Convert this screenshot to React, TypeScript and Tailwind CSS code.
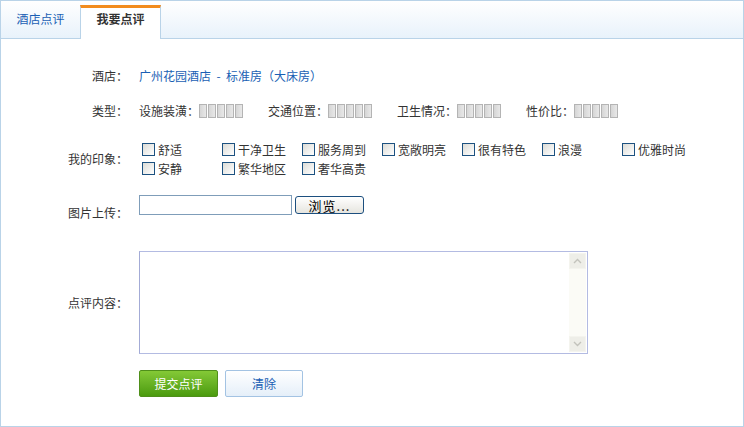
import React from 'react';

const font = { fontFamily: '"Noto Sans CJK SC", "Liberation Sans", sans-serif' };

const impressions = [
  ['舒适', '干净卫生', '服务周到', '宽敞明亮', '很有特色', '浪漫', '优雅时尚'],
  ['安静', '繁华地区', '奢华高贵'],
];

const ratings = ['设施装潢', '交通位置', '卫生情况', '性价比'];

const Stars: React.FC = () => (
  <div className="flex gap-[1px]">
    {[0, 1, 2, 3, 4].map((i) => (
      <span
        key={i}
        className="block w-[8px] h-[14px] border border-[#b4b4b4] bg-gradient-to-r from-[#d6d6d6] to-[#e8e8e8]"
      />
    ))}
  </div>
);

const Check: React.FC<{ label: string }> = ({ label }) => (
  <label className="w-[80px] flex items-center h-[19px]">
    <span className="block ml-[3px] w-[13px] h-[13px] border border-[#1c5180] bg-gradient-to-br from-[#dcdcd7] to-[#ffffff]" />
    <span className="ml-[3px] leading-none">{label}</span>
  </label>
);

const Label: React.FC<{ children: React.ReactNode; className?: string }> = ({ children, className }) => (
  <div className={`w-[127px] shrink-0 text-right ${className ?? ''}`}>{children}</div>
);

const App: React.FC = () => {
  return (
    <div
      className="w-[744px] h-[427px] border border-[#b9d3e8] bg-white text-[12px] text-[#333] overflow-hidden"
      style={font}
    >
      {/* tabs */}
      <div className="h-[38px] flex items-end bg-gradient-to-b from-[#ffffff] to-[#e8f2fb] border-b border-[#b9d3e8]">
        <div className="w-[79px] h-[37px] flex items-center justify-center text-[#1a5fb4] pb-[2px]">
          酒店点评
        </div>
        <div className="w-[81px] h-[34px] -mb-[1px] bg-white border-x border-[#b9d3e8] border-t-[3px] border-t-[#f28c1e] flex items-start justify-center pt-[2px] font-bold text-[#333]">
          我要点评
        </div>
      </div>

      <div className="flex flex-col">
        {/* hotel */}
        <div className="flex items-center h-[20px] mt-[27px]">
          <Label>酒店：</Label>
          <div className="ml-[11px] text-[#1a5fb4] whitespace-pre">广州花园酒店  -  标准房（大床房）</div>
        </div>

        {/* type */}
        <div className="flex items-center h-[20px] mt-[15px]">
          <Label>类型：</Label>
          <div className="ml-[11px] flex">
            {ratings.map((r) => (
              <div key={r} className="w-[129px] flex items-center">
                <span>{r}：</span>
                <Stars />
              </div>
            ))}
          </div>
        </div>

        {/* impressions */}
        <div className="flex items-center mt-[19px]">
          <Label>我的印象：</Label>
          <div className="ml-[11px] flex flex-col">
            {impressions.map((row, i) => (
              <div key={i} className="flex">
                {row.map((l) => (
                  <Check key={l} label={l} />
                ))}
              </div>
            ))}
          </div>
        </div>

        {/* upload */}
        <div className="flex items-start mt-[17px]">
          <Label className="mt-[10px] leading-[16px]">图片上传：</Label>
          <div className="ml-[11px] flex items-center">
            <div className="w-[153px] h-[20px] border border-[#7f9db9] bg-white" />
            <button className="ml-[3px] w-[69px] h-[18px] border border-[#1c4f7f] rounded-[3px] bg-gradient-to-b from-[#ffffff] to-[#e6e5df] text-[13px] leading-none text-black tracking-[1px]">
              浏览...
            </button>
          </div>
        </div>

        {/* content */}
        <div className="flex items-center mt-[30px]">
          <Label>点评内容：</Label>
          <div className="ml-[11px] w-[449px] h-[103px] border border-[#b3bbe2] border-l-[#a3abd6] bg-white flex justify-end p-[1px]">
            <div className="w-[17px] h-full bg-[#fbfbf6] flex flex-col justify-between">
              <div className="h-[16px] bg-[#eeeee8] border border-[#f4f4ee] flex items-center justify-center">
                <svg width="9" height="6" viewBox="0 0 9 6">
                  <path d="M1 5 L4.5 1.5 L8 5" fill="none" stroke="#c3c3bc" strokeWidth="1.4" />
                </svg>
              </div>
              <div className="h-[16px] bg-[#eeeee8] border border-[#f4f4ee] flex items-center justify-center">
                <svg width="9" height="6" viewBox="0 0 9 6">
                  <path d="M1 1 L4.5 4.5 L8 1" fill="none" stroke="#c3c3bc" strokeWidth="1.4" />
                </svg>
              </div>
            </div>
          </div>
        </div>

        {/* buttons */}
        <div className="flex mt-[16px] pl-[138px] gap-[7px]">
          <button className="w-[79px] h-[27px] rounded-[2px] border border-[#4f8f1a] bg-gradient-to-b from-[#84c936] to-[#4b9b0d] text-white">
            提交点评
          </button>
          <button className="w-[78px] h-[27px] rounded-[2px] border border-[#a3c3e3] bg-gradient-to-b from-[#ffffff] to-[#e5eff9] text-[#1a5fb4]">
            清除
          </button>
        </div>
      </div>
    </div>
  );
};

export default App;
